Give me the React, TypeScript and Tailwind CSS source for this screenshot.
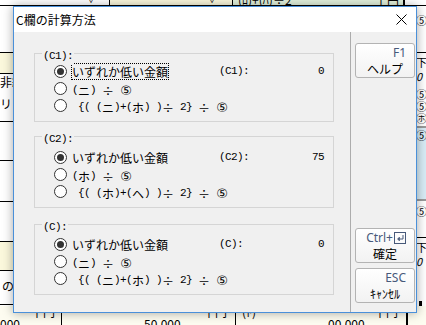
import React from "react";

const GROUPS = [
  {
    label: "(C1):",
    value: "0",
    pad: "pt-[9px]",
    opts: ["いずれか低い金額", "(ニ) ÷ ⑤", " {( (ニ)+(ホ) )÷ 2} ÷ ⑤"],
    focus: true,
  },
  {
    label: "(C2):",
    value: "75",
    pad: "pt-[12px]",
    opts: ["いずれか低い金額", "(ホ) ÷ ⑤", " {( (ホ)+(ヘ) )÷ 2} ÷ ⑤"],
    focus: false,
  },
  {
    label: "(C):",
    value: "0",
    pad: "pt-[11px]",
    opts: ["いずれか低い金額", "(ニ) ÷ ⑤", " {( (ニ)+(ホ) )÷ 2} ÷ ⑤"],
    focus: false,
  },
];

// fixed-pitch text: half-width 6px, full-width 12px (MS Gothic style)
function Mono({ s }: { s: string }) {
  return (
    <span className="inline-flex whitespace-pre">
      {Array.from(s).map((c, i) =>
        c.charCodeAt(0) < 128 ? (
          <span key={i} className="inline-block w-[6px] text-center font-['Liberation_Mono',monospace] text-[11px]">
            {c === " " ? "\u00a0" : c}
          </span>
        ) : c === "⑤" ? (
          <span key={i} className="inline-block w-[12px] text-center font-['DejaVu_Sans','Noto_Sans_CJK_JP',sans-serif] text-[13px]">
            {c}
          </span>
        ) : (
          <span key={i} className="inline-block w-[12px] text-center font-['Noto_Sans_CJK_JP',sans-serif] text-[12px]">
            {c}
          </span>
        )
      )}
    </span>
  );
}

function Radio({ on }: { on: boolean }) {
  return (
    <span className="w-[13px] h-[13px] shrink-0 rounded-full border border-[#333] bg-white flex items-center justify-center">
      {on && <span className="w-[7px] h-[7px] rounded-full bg-[#333]" />}
    </span>
  );
}

function Group({ g }: { g: (typeof GROUPS)[number] }) {
  return (
    <div className={`relative w-[300px] border border-[#d5d5d5] pl-[19px] pb-[7px] ${g.pad}`}>
      {/* caption sitting on the frame line */}
      <div className="absolute left-[7px] -top-[9px] bg-[#f0f0f0] leading-[17px] px-[1px]">
        <Mono s={g.label} />
      </div>
      {g.opts.map((o, i) => (
        <div key={i} className="flex items-center h-[17px] leading-[17px]">
          <div className="flex items-center w-[165px]">
            <Radio on={i === 0} />
            <span
              className={`ml-[4px] border leading-[15px] ${
                i === 0 && g.focus ? "border-dotted border-black" : "border-transparent"
              }`}
            >
              <Mono s={o} />
            </span>
          </div>
          {i === 0 && (
            <>
              <Mono s={g.label} />
              <div className="flex-1 flex justify-end pr-[9px]">
                <Mono s={g.value} />
              </div>
            </>
          )}
        </div>
      ))}
    </div>
  );
}

function EnterIcon() {
  return (
    <svg width="12" height="12" viewBox="0 0 12 12" className="ml-[1px]">
      <rect x="0.5" y="0.5" width="11" height="11" fill="none" stroke="#47597a" />
      <path d="M9 3v4H4" fill="none" stroke="#47597a" />
      <path d="M5.5 5L3.5 7l2 2z" fill="#47597a" stroke="#47597a" strokeWidth="0.6" />
    </svg>
  );
}

function KeyButton({ k, label, icon }: { k: string; label: string; icon?: boolean }) {
  return (
    <button className="w-[60px] h-[35px] rounded-[3px] border border-[#b3b3b3] bg-gradient-to-b from-white to-[#f2f2f2] flex flex-col pt-[1px]">
      <div className="flex items-center justify-end pr-[8px] h-[16px] text-[12px] leading-[16px] text-[#47597a] font-['Noto_Sans',sans-serif]">
        {k}
        {icon && <EnterIcon />}
      </div>
      <div className="text-center text-[12px] leading-[16px] text-black font-['Noto_Sans_CJK_JP',sans-serif]">
        {label}
      </div>
    </button>
  );
}

// spreadsheet behind the dialog: only its edges show
function Backdrop() {
  return (
    <div className="absolute inset-0 flex flex-col font-['Noto_Sans_CJK_JP',sans-serif] text-[12px] text-black whitespace-nowrap">
      {/* top row */}
      <div className="h-[12px] flex -mt-[6px] items-end leading-[12px] border-b border-black">
        <div className="w-[110px] h-full border-r border-black flex justify-end pr-[14px] text-[8px]">∨</div>
        <div className="w-[123px] h-full bg-[#fbf8dc] border-r border-black flex justify-end pr-[16px] text-[8px]">∨</div>
        <div className="w-[172px] h-full bg-[#e2f1dc] border-r-2 border-black flex justify-between pl-[5px] pr-[4px]">
          <span>(ﾛ)+(ﾊ)÷2</span>
          <span>千円</span>
        </div>
      </div>
      <div className="flex-1 flex">
        {/* left column */}
        <div className="w-[20px] flex flex-col leading-[14px] overflow-hidden">
          <div className="h-[47px] shrink-0 border-b border-black" />
          <div className="h-[21px] shrink-0 bg-[#fbf8dc] border-b border-black" />
          <div className="h-[48px] shrink-0 border-b border-black pt-[1px]">
            <div>非経</div>
            <div className="mt-[8px]">リ</div>
          </div>
          <div className="h-[39px] shrink-0 border-b border-black" />
          <div className="h-[41px] shrink-0 border-b border-black" />
          <div className="h-[40px] shrink-0 border-b border-black" />
          <div className="h-[29px] shrink-0 bg-[#fbf8dc] border-b border-black" />
          <div className="h-[34px] shrink-0 border-b border-black pl-[2px] pt-[8px]">の</div>
        </div>
        <div className="flex-1" />
        {/* right column */}
        <div className="w-[10px] flex flex-col leading-[12px] text-[11px] overflow-hidden">
          <div className="h-[46px] shrink-0 pt-[8px]">⑤</div>
          <div className="h-[36px] shrink-0 border-t border-black pt-[2px] leading-[14px]">
            <div>下</div>
            <div className="italic">0</div>
          </div>
          <div className="h-[38px] shrink-0 flex flex-col">
            <span>⑤</span>
            <span>⑤</span>
            <span>㋭</span>
          </div>
          <div className="h-[75px] shrink-0 bg-[#d8ecf6] border-y-2 border-[#9a9a9a] pt-[1px]">⑤</div>
          <div className="h-[36px] shrink-0 pt-[4px]">⑤</div>
          <div className="h-[36px] shrink-0 border-t border-black pt-[2px] leading-[14px]">
            <div>下</div>
            <div className="italic">0</div>
          </div>
          <div className="flex-1 ml-[3px] w-[3px] bg-black mt-[28px]" />
        </div>
      </div>
      {/* bottom row */}
      <div className="h-[19px] -mt-[6px] flex bg-[#fdfcf0] leading-[12px]">
        <div className="w-[62px] border-r border-black flex flex-col items-end pr-[6px]">
          <span>千円</span>
          <span className="self-start">000</span>
        </div>
        <div className="w-[174px] border-r border-black flex flex-col items-end pr-[8px]">
          <span>千円</span>
          <span className="self-start pl-[82px]">50,000</span>
        </div>
        <div className="w-[172px] border-r-2 border-black flex flex-col pl-[6px] pr-[8px]">
          <div className="flex justify-between">
            <span>(ﾄ)</span>
            <span>千円</span>
          </div>
          <span className="pl-[86px]">00,000</span>
        </div>
      </div>
    </div>
  );
}

export default function App() {
  return (
    <div className="relative w-[426px] h-[325px] overflow-hidden bg-white">
      <Backdrop />
      <div className="absolute left-[13px] top-[6px] w-[404px] h-[307px] border border-[#4a90d9] bg-[#f0f0f0] shadow-[0_0_10px_rgba(0,0,0,0.35)] flex flex-col">
        {/* title bar */}
        <div className="h-[25px] bg-white flex items-center pl-[2px] pr-[9px]">
          <span className="flex-1 text-[12px] text-black font-['Noto_Sans_CJK_JP',sans-serif]">C欄の計算方法</span>
          <svg width="11" height="11" viewBox="0 0 11 11">
            <path d="M0.5 0.5L10.5 10.5M10.5 0.5L0.5 10.5" stroke="#000" strokeWidth="1" />
          </svg>
        </div>
        {/* body */}
        <div className="flex-1 flex text-black">
          <div className="w-[336px] pl-[20px] pt-[21px] flex flex-col">
            <Group g={GROUPS[0]} />
            <div className="h-[14px]" />
            <Group g={GROUPS[1]} />
            <div className="h-[16px]" />
            <Group g={GROUPS[2]} />
          </div>
          <div className="w-[1px] bg-[#acacac]" />
          <div className="flex-1 flex flex-col pl-[4px] pt-[11px] pb-[9px]">
            <KeyButton k="F1" label="ヘルプ" />
            <div className="flex-1" />
            <KeyButton k="Ctrl+" label="確定" icon />
            <div className="h-[5px]" />
            <KeyButton k="ESC" label="ｷｬﾝｾﾙ" />
          </div>
        </div>
      </div>
    </div>
  );
}
